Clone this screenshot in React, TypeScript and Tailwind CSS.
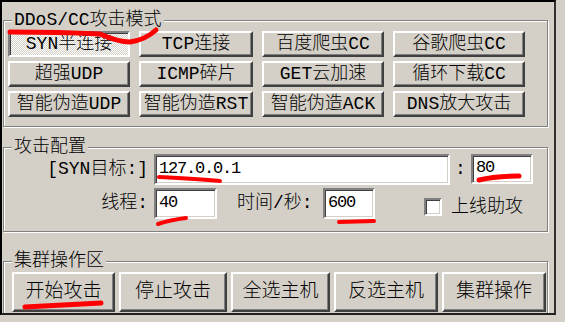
const raised =
  "flex items-center justify-center leading-none bg-[#d4d0c8] border-2 border-t-white border-l-white border-r-[#404040] border-b-[#404040] shadow-[inset_-1px_-1px_0_#808080]";
const pushed =
  "flex items-center justify-center leading-none border-2 border-t-[#808080] border-l-[#808080] border-r-white border-b-white shadow-[inset_1px_1px_0_#404040] bg-[conic-gradient(#ffffff_25%,#d4d0c8_0_50%,#ffffff_0_75%,#d4d0c8_0)] bg-[length:2px_2px]";
const sunken =
  "flex items-center bg-white border-2 border-t-[#808080] border-l-[#808080] border-r-white border-b-white shadow-[inset_1px_1px_0_#404040,inset_-1px_-1px_0_#d4d0c8]";
const group =
  "ml-[1px] w-[545px] px-0 border border-[#808080] shadow-[inset_1px_1px_0_#ffffff,1px_1px_0_#ffffff]";
const legend = "ml-[8px] px-[2px] leading-[14px] bg-[#d4d0c8]";

const modes = [
  "SYN半连接",
  "TCP连接",
  "百度爬虫CC",
  "谷歌爬虫CC",
  "超强UDP",
  "ICMP碎片",
  "GET云加速",
  "循环下载CC",
  "智能伪造UDP",
  "智能伪造RST",
  "智能伪造ACK",
  "DNS放大攻击",
];

const actions = [
  { label: "开始攻击", w: "w-[103px]" },
  { label: "停止攻击", w: "w-[108px]" },
  { label: "全选主机", w: "w-[99px]" },
  { label: "反选主机", w: "w-[104px]" },
  { label: "集群操作", w: "w-[104px]" },
];

function Scribbles() {
  // red marker strokes drawn over the screenshot
  return (
    <svg
      className="absolute inset-0 pointer-events-none"
      width="565"
      height="322"
      viewBox="0 0 565 322"
      fill="none"
      stroke="#ff0000"
      strokeLinecap="round"
    >
      <path d="M10 32 Q60 32 100 34 Q118 42 130 42 Q145 40 156 30" strokeWidth="5" />
      <path d="M159 177 C180 178 200 179 220 181" strokeWidth="4" />
      <path d="M479 180 Q495 176 519 176" strokeWidth="5" />
      <path d="M158 224 Q170 220 186 218" strokeWidth="4" />
      <path d="M339 222 L374 221" strokeWidth="4" />
      <path d="M25 307 Q60 305 101 303" strokeWidth="5" />
    </svg>
  );
}

export default function App() {
  return (
    <div className="relative w-[565px] h-[322px] overflow-hidden bg-[#d4d0c8] text-black text-[18px] font-light font-['Liberation_Mono','Noto_Sans_CJK_SC',monospace]">
      <div className="w-[556px] h-[315px] overflow-hidden border-2 border-black border-r-[#303030] border-b-[#202020]">
        <fieldset className={group + " mt-[11px] pt-[4px] pb-[9px]"}>
          <legend className={legend}>DDoS/CC攻击模式</legend>
          <div className="grid grid-cols-[122px_114px_122px_132px] gap-x-[9px] gap-y-[4px] pl-[4px]">
            {modes.map((m, i) => (
              <div key={m} className={(i === 0 ? pushed : raised) + " h-[26px]"}>
                {m}
              </div>
            ))}
          </div>
        </fieldset>

        <fieldset className={group + " mt-[13px] pt-0 pb-[12px]"}>
          <legend className={legend}>攻击配置</legend>
          <div className="flex flex-col gap-[3px]">
            <div className="flex items-center h-[31px]">
              <span className="w-[144px] text-right">[SYN目标:]</span>
              <div className={sunken + " ml-[6px] w-[296px] h-full pl-[3px] pb-[2px] text-[17px] tracking-[-1.2px]"}>
                127.0.0.1
              </div>
              <span className="w-[21px] text-center">:</span>
              <div className={sunken + " w-[62px] h-[30px] -mt-[2px] pl-[3px] pb-[2px] text-[17px] tracking-[-1.2px]"}>
                80
              </div>
            </div>
            <div className="flex items-center h-[31px]">
              <span className="w-[144px] text-right">线程:</span>
              <div className={sunken + " ml-[6px] w-[63px] h-full pl-[3px] pb-[2px] text-[17px] tracking-[-1.2px]"}>
                40
              </div>
              <span className="ml-[20px] w-[86px]">时间/秒:</span>
              <div className={sunken + " w-[52px] h-full pl-[3px] pb-[2px] text-[17px] tracking-[-1.2px]"}>
                600
              </div>
              <label className="ml-[49px] mt-[7px] flex items-center">
                <span className={sunken + " w-[18px] h-[18px]"} />
                <span className="ml-[9px]">上线助攻</span>
              </label>
            </div>
          </div>
        </fieldset>

        <fieldset className={group + " mt-[22px] pt-[4px] pb-[8px]"}>
          <legend className={legend}>集群操作区</legend>
          <div className="flex gap-[4px] pl-[8px]">
            {actions.map((a) => (
              <div key={a.label} className={raised + " h-[40px] text-[19px] " + a.w}>
                {a.label}
              </div>
            ))}
          </div>
        </fieldset>
      </div>
      <Scribbles />
    </div>
  );
}
